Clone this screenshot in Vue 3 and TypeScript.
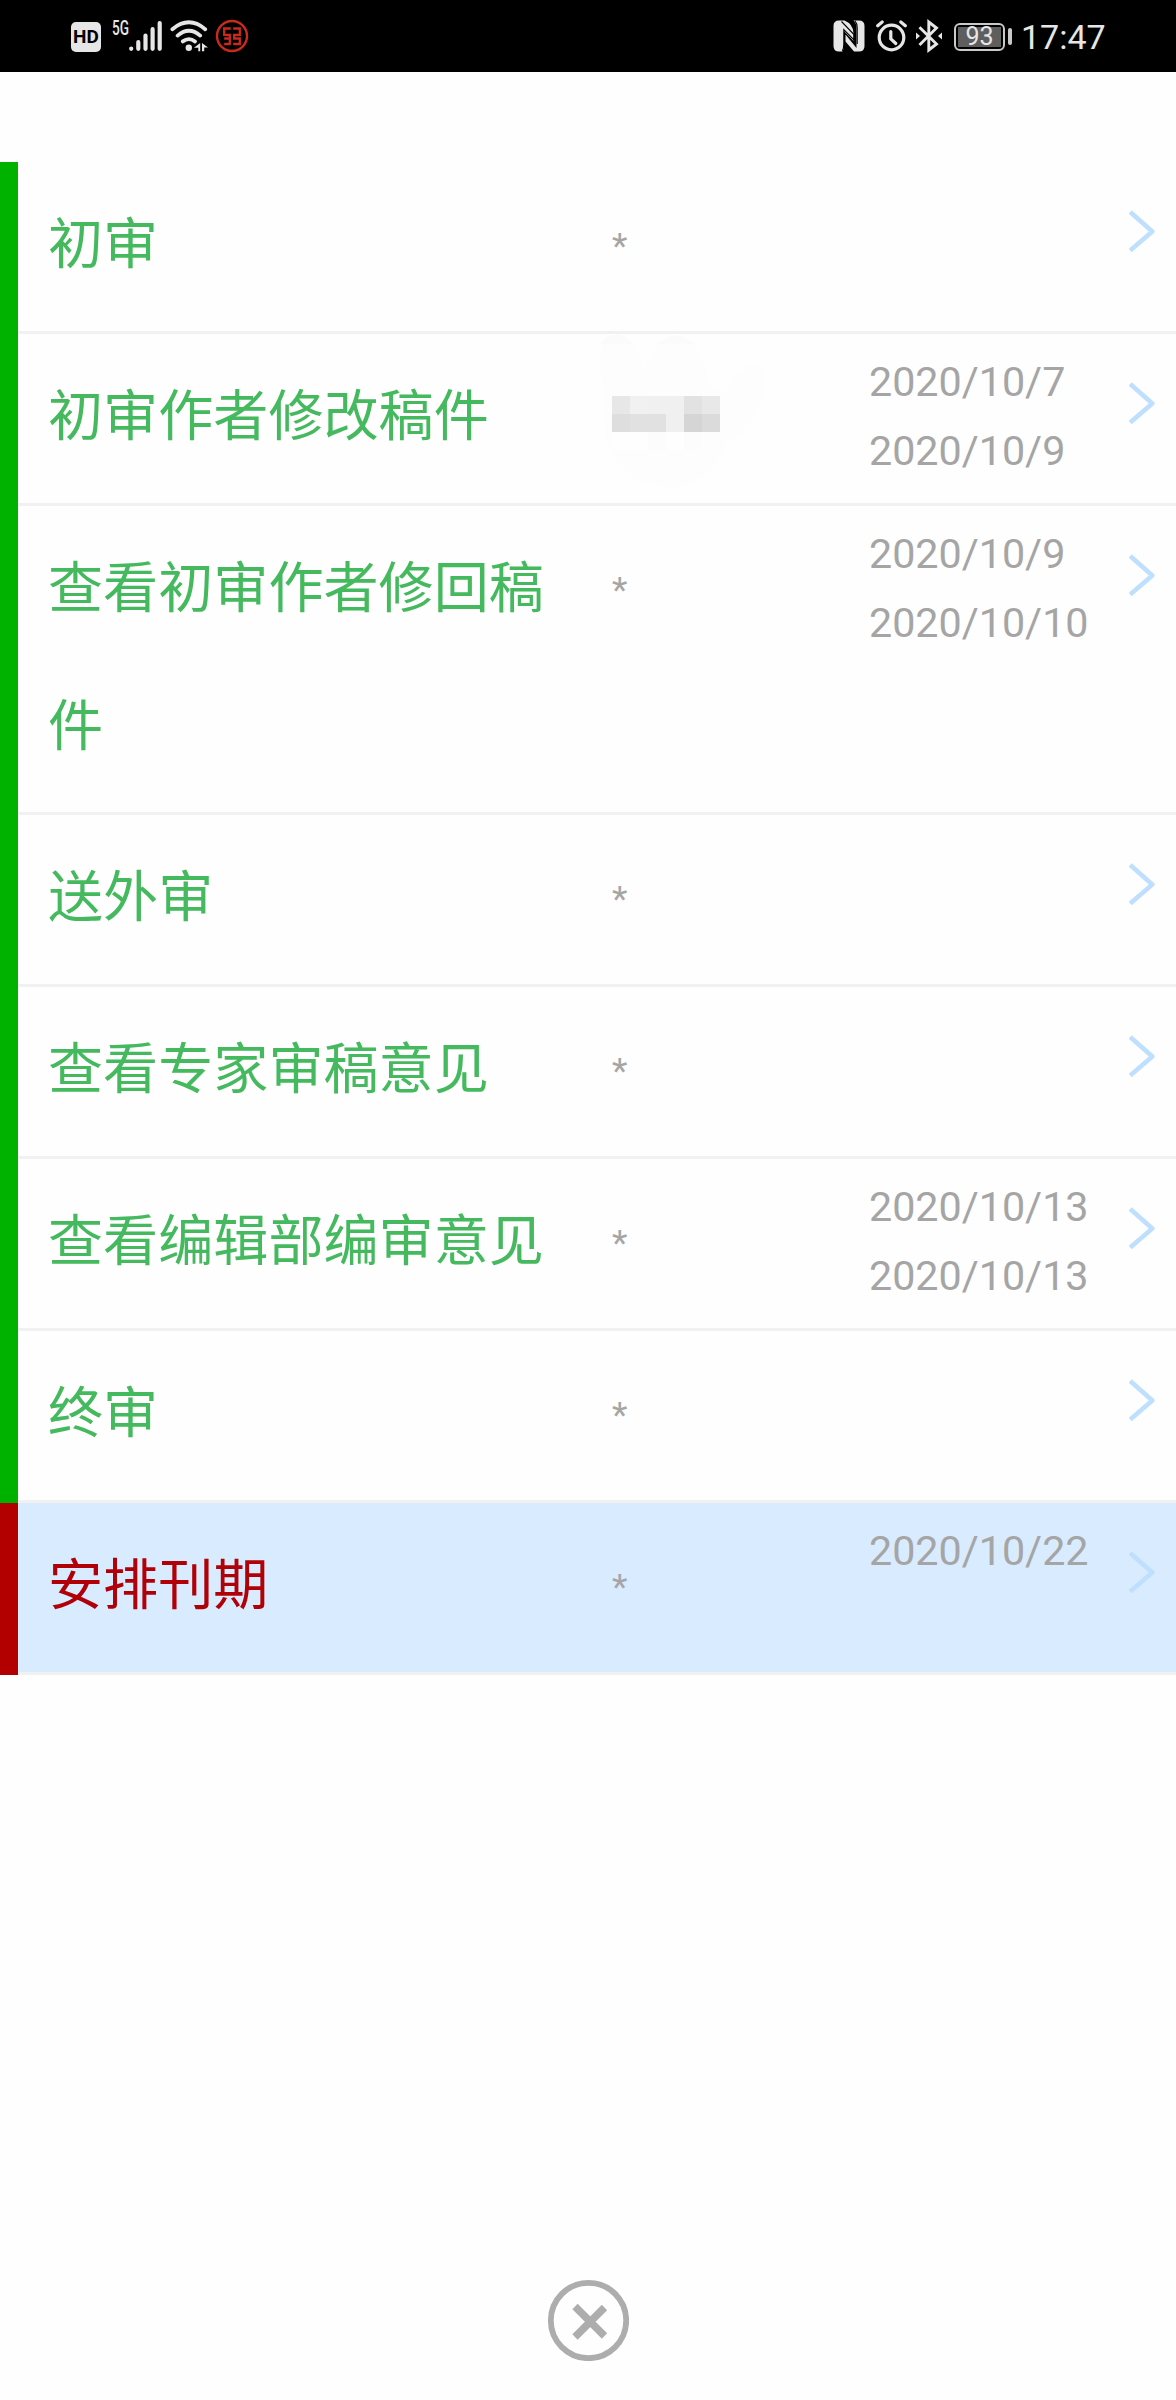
<script setup lang="ts">
interface Step {
  name: string
  dates: string[]
  masked?: boolean
  current?: boolean
}

const steps: Step[] = [
  { name: '初审', dates: [] },
  { name: '初审作者修改稿件', dates: ['2020/10/7', '2020/10/9'], masked: true },
  { name: '查看初审作者修回稿件', dates: ['2020/10/9', '2020/10/10'] },
  { name: '送外审', dates: [] },
  { name: '查看专家审稿意见', dates: [] },
  { name: '查看编辑部编审意见', dates: ['2020/10/13', '2020/10/13'] },
  { name: '终审', dates: [] },
  { name: '安排刊期', dates: ['2020/10/22'], current: true },
]

const mosaic: string[][] = [
  ['#e7e7e7', '#f1f1f1', '#f0f0f0', '#f0f0f0', '#e2e2e2', '#e8e8e8'],
  ['#dedede', '#e1e1e1', '#e1e1e1', '#f0f0f0', '#d5d5d5', '#dbdbdb'],
  ['#fefefe', '#fefefe', '#fcfcfc', '#fefefe', '#fcfcfc', '#fdfdfd'],
]
</script>

<template>
  <div class="screen">
    <header class="status">
      <div class="left">
        <span class="hd">HD</span>
        <span class="net">5G</span>
        <svg class="signal" width="34" height="34" viewBox="0 0 34 34" stroke="#e6e6e6" stroke-width="4.2" stroke-linecap="round">
          <path d="M2.2 29.6v.2M9.3 23.2v6.6M16.5 16.6v13.2M23.6 10.2v19.6M30.7 4v25.8" />
        </svg>
        <svg class="wifi" width="38" height="34" viewBox="0 0 38 34" fill="none" stroke="#e6e6e6" stroke-width="3.8" stroke-linecap="round">
          <path d="M2.4 10.2Q19-3.6 35.2 10.2M7.6 16.6Q19 7 30.2 16.6M12.8 22.4Q19 17.8 25 22.4" />
          <circle cx="18.8" cy="28.7" r="3.2" fill="#e6e6e6" stroke="none" />
          <path d="M30.200 24v8.200h-1.900v-3.400h-4.300zM32 24l6 4.400h-3.800v3.800H32z" fill="#e6e6e6" stroke="none" />
        </svg>
        <svg class="bank" width="34" height="34" viewBox="0 0 34 34" fill="none" stroke="#c92a1c">
          <circle cx="17" cy="17" r="15" stroke-width="2.4" />
          <path d="M15.800 9.500H9.200v6.300h5.600v3.700H9.200M15.800 25H9.200M14.800 19.500V25M18.200 9.500h6.600v6.300h-5.600v3.700h5.600V25h-6.600" stroke-width="2.300" />
        </svg>
      </div>
      <div class="right">
        <svg class="nfc" width="32" height="32" viewBox="0 0 32 32">
          <path fill="#e6e6e6" d="M6 .5h5.500Q20 4 20.500 13v8L11 11v12q0 6 -1.500 8.500H6Q.5 31.500.5 26V6Q.5.500 6 .5z" />
          <path fill="#e6e6e6" d="M26 .5h-5.500Q23.500 3 23.500 8v20L12.500 14.500v7L21 31.500h5q5.500 0 5.500-5.500V6Q31.500.5 26 .5z" />
          <path d="M8.500 1.500 21 14.500V20L10.800 9.500V24q0 5-1.500 7M22 .8q2.200 2.500 2.200 7V24" fill="none" stroke="#000" stroke-width="1.100" />
        </svg>
        <svg class="alarm" width="32" height="32" viewBox="0 0 32 32" fill="none" stroke="#e6e6e6" stroke-linecap="round">
          <circle cx="15.500" cy="17.500" r="12.3" stroke-width="3.200" />
          <path d="M1.700 5.800 6.200 2M29.300 5.800 24.800 2" stroke-width="3.200" />
          <path d="M14.800 11.500v7.300l5 4.700" stroke-width="3.200" />
        </svg>
        <svg class="bt" width="26" height="34" viewBox="0 0 26 34" fill="none" stroke="#e6e6e6" stroke-width="2.900">
          <path d="M3.500 8.200 20.500 25 12.800 31V3l7.700 6L3.500 26" />
          <path d="m0 13.500 4 3.500-4 3.500zM26 13.500 22 17l4 3.500z" fill="#e6e6e6" stroke="none" />
        </svg>
        <span class="battery"><span class="level">93</span></span>
        <span class="nub"></span>
        <span class="clock">17:47</span>
      </div>
    </header>

    <main class="list">
      <div v-for="(s, i) in steps" :key="i" class="row" :class="{ current: s.current }">
        <div class="name">{{ s.name }}</div>
        <div class="who">
          <div v-if="s.masked" class="masked">
            <svg class="smudge" width="180" height="160" viewBox="0 0 180 160">
              <path d="M7 50Q-2 0 20 0Q42 2 48 38Q60 2 80 2Q105 6 112 48Q130 72 140 40Q163 20 169 45Q164 90 130 110Q115 152 72 154Q25 150 10 105z" fill="#fdfdfd" />
              <path d="M5 10Q20-9 37 10zM62 10Q80-7 98 10z" fill="#fbfbfb" />
            </svg>
            <div v-for="(line, r) in mosaic" :key="r" class="cells">
              <i v-for="(c, k) in line" :key="k" :style="{ background: c }"></i>
            </div>
          </div>
          <span v-else class="star">*</span>
        </div>
        <div class="dates">
          <div v-for="(d, k) in s.dates" :key="k">{{ d }}</div>
        </div>
        <svg class="chev" width="28" height="44" viewBox="0 0 28 44" fill="none" stroke="#bfdfff" stroke-width="4.600">
          <path d="M1.200 3 23.300 22.500 1.200 41.600" stroke-linejoin="round" />
        </svg>
      </div>
    </main>

    <footer class="foot">
      <svg width="82" height="82" viewBox="0 0 82 82" fill="none" stroke="#adadad">
        <circle cx="41.500" cy="41.500" r="37.700" stroke-width="5.800" />
        <path d="M28 27.500 57.500 57M57.500 28.500 28 58" stroke-width="7.500" />
      </svg>
    </footer>
  </div>
</template>

<style>
body {
  margin: 0;
  background: #fefefe;
}
</style>

<style scoped>
.screen {
  width: 1176px;
  height: 2400px;
  display: flex;
  flex-direction: column;
  overflow: hidden;
  background: #fefefe;
  font-family: Roboto, "Noto Sans CJK SC", sans-serif;
}
.status {
  height: 72px;
  flex: none;
  display: flex;
  justify-content: space-between;
  background: #000;
  color: #e6e6e6;
}
.left,
.right {
  display: flex;
  align-items: flex-start;
}
.left {
  padding-left: 71px;
}
.hd {
  width: 30px;
  height: 30px;
  margin-top: 22px;
  border-radius: 5px;
  background: #e6e6e6;
  color: #000;
  font: bold 19px/30px Roboto, sans-serif;
  text-align: center;
}
.net {
  width: 17px;
  margin: 18px 0 0 11px;
  font: 500 20px/20px Roboto, sans-serif;
  transform: scaleX(0.68);
  transform-origin: 0 0;
}
.signal {
  margin: 19px 0 0 0;
}
.wifi {
  margin: 19px 0 0 7px;
}
.bank {
  margin: 19px 0 0 7px;
}
.right {
  padding-right: 71px;
}
.nfc {
  margin: 20px 11px 0 0;
}
.alarm {
  margin: 20px 8px 0 0;
}
.bt {
  margin: 19px 12px 0 0;
}
.battery {
  box-sizing: border-box;
  width: 51px;
  height: 28px;
  margin-top: 22.500px;
  padding: 2px;
  border: 2px solid #c9c9c9;
  border-radius: 6px;
  display: flex;
}
.level {
  width: 43px;
  height: 20px;
  background: #5e5e5e;
  font-size: 25px;
  line-height: 20px;
  text-align: center;
}
.nub {
  width: 4px;
  height: 17px;
  margin: 28px 9px 0 3px;
  border-radius: 2px;
  background: #c9c9c9;
}
.clock {
  width: 84px;
  margin-top: 16.500px;
  font-size: 34px;
  line-height: 40px;
}
.list {
  margin-top: 90px;
}
.row {
  box-sizing: border-box;
  min-height: 172px;
  display: flex;
  align-items: flex-start;
  background:
    linear-gradient(#00b200, #00b200) 0 0 / 18px 100% no-repeat,
    linear-gradient(#f1f1f1, #f1f1f1) 0 100% / 100% 3px no-repeat;
  color: #45b95e;
}
.current {
  background:
    linear-gradient(#b20000, #b20000) 0 0 / 18px 100% no-repeat,
    linear-gradient(#f1f1f1, #f1f1f1) 0 100% / 100% 3px no-repeat,
    #d9ebff;
  color: #b00008;
}
.name {
  width: 500px;
  margin-left: 48px;
  padding: 14px 0 20px;
  font-size: 55.100px;
  line-height: 137.500px;
}
.who {
  width: 257px;
  margin-left: 64px;
  padding-top: 62px;
  font-size: 35.750px;
  line-height: 42px;
  color: #a5a5a5;
}
.star {
  display: block;
  padding-top: 1px;
}
.masked {
  position: relative;
}
.smudge {
  position: absolute;
  left: -16px;
  top: -62px;
}
.cells {
  position: relative;
  display: flex;
}
.cells i {
  width: 18px;
  height: 18px;
}
.dates {
  width: 230px;
  padding-top: 14px;
  font-size: 41.250px;
  line-height: 68.750px;
  color: #a5a5a5;
}
.chev {
  margin: 47px 0 0 30px;
}
.foot {
  margin-top: auto;
  height: 121px;
  display: flex;
  justify-content: center;
}
</style>
